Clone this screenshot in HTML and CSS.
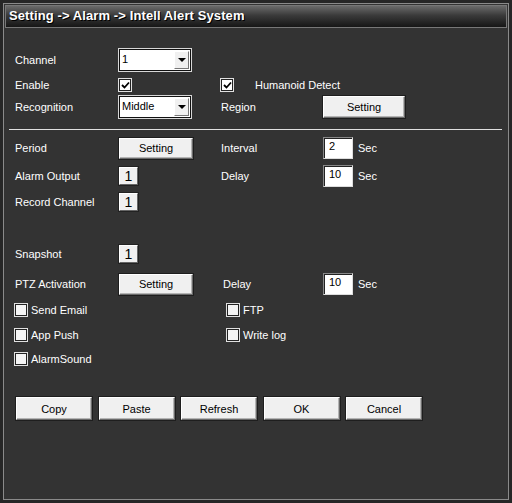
FILE: index.html
```html
<!DOCTYPE html>
<html lang="en">
<head>
    <meta charset="UTF-8">
    <title>Intell Alert System</title>
    <link rel="stylesheet" href="styles.css">
</head>
<body>
    <div class="window">
        <div class="inner">
            <div class="title-bar">Setting -&gt; Alarm -&gt; Intell Alert System</div>
            <div class="content">
                <div class="row row-channel">
                    <span class="label">Channel</span>
                    <span class="field">
                        <span class="select"><span class="select-text">1</span><span class="select-btn"><span class="arrow"></span></span></span>
                    </span>
                </div>
                <div class="row row-enable">
                    <span class="label">Enable</span>
                    <span class="field"><span class="check checked"><svg width="9" height="9" viewBox="0 0 9 9"><path d="M1 4 L3.5 6.5 L8 1.5" fill="none" stroke="#000" stroke-width="1.8"/></svg></span></span>
                    <span class="field-sm"><span class="check checked"><svg width="9" height="9" viewBox="0 0 9 9"><path d="M1 4 L3.5 6.5 L8 1.5" fill="none" stroke="#000" stroke-width="1.8"/></svg></span></span>
                    <span class="label-plain">Humanoid Detect</span>
                </div>
                <div class="row row-recog">
                    <span class="label">Recognition</span>
                    <span class="field">
                        <span class="select"><span class="select-text">Middle</span><span class="select-btn"><span class="arrow"></span></span></span>
                    </span>
                    <span class="label label2">Region</span>
                    <span class="btn btn-wide">Setting</span>
                </div>

                <div class="separator"></div>

                <div class="row row-period">
                    <span class="label">Period</span>
                    <span class="field"><span class="btn btn-set">Setting</span></span>
                    <span class="label label2">Interval</span>
                    <span class="num-input">2</span>
                    <span class="unit">Sec</span>
                </div>
                <div class="row row-output">
                    <span class="label">Alarm Output</span>
                    <span class="field"><span class="chan-box">1</span></span>
                    <span class="label label2">Delay</span>
                    <span class="num-input">10</span>
                    <span class="unit">Sec</span>
                </div>
                <div class="row row-record">
                    <span class="label">Record Channel</span>
                    <span class="field"><span class="chan-box">1</span></span>
                </div>
                <div class="row row-snap">
                    <span class="label">Snapshot</span>
                    <span class="field"><span class="chan-box">1</span></span>
                </div>
                <div class="row row-ptz">
                    <span class="label">PTZ Activation</span>
                    <span class="field"><span class="btn btn-set">Setting</span></span>
                    <span class="label label2 ptz-delay">Delay</span>
                    <span class="num-input">10</span>
                    <span class="unit">Sec</span>
                </div>
                <div class="row row-opt1">
                    <span class="opt"><span class="check"></span>Send Email</span>
                    <span class="opt"><span class="check"></span>FTP</span>
                </div>
                <div class="row row-opt">
                    <span class="opt"><span class="check"></span>App Push</span>
                    <span class="opt"><span class="check"></span>Write log</span>
                </div>
                <div class="row row-opt-last">
                    <span class="opt"><span class="check"></span>AlarmSound</span>
                </div>

                <div class="actions">
                    <span class="btn btn-action">Copy</span>
                    <span class="btn btn-action">Paste</span>
                    <span class="btn btn-action">Refresh</span>
                    <span class="btn btn-action">OK</span>
                    <span class="btn btn-action">Cancel</span>
                </div>
            </div>
        </div>
    </div>
</body>
</html>
```

FILE: styles.css
```css
/* Janela de configuracao */
body {
    margin: 0;
    padding: 0;
    background-color: #262626;
    font-family: "Liberation Sans", Arial, sans-serif;
    font-size: 11px;
    color: #fff;
}
.window {
    width: 512px;
    height: 503px;
    box-sizing: border-box;
    padding: 3px 3px 3px 3px;
    background-color: #262626;
}
.inner {
    height: 100%;
    box-sizing: border-box;
    border: 1px solid #8a8a8a;
    background-color: #333;
}
.title-bar {
    height: 21px;
    margin: 1px;
    padding-left: 3px;
    border: 1px solid #777;
    background: linear-gradient(#6a6a6a, #3a3a3a 45%, #161616);
    color: #fff;
    font-weight: bold;
    font-size: 13px;
    line-height: 20px;
    text-shadow: 1px 1px 0 #000;
    letter-spacing: 0.1px;
}
.content {
    padding: 20px 0 0 11px;
}
.row {
    display: flex;
    align-items: center;
    height: 22px;
}
.row-enable { margin-top: 3px; }
.row-recog { margin-top: 0; }
.row-period { margin-top: 7px; }
.row-output { margin-top: 6px; }
.row-record { margin-top: 4px; }
.row-snap { margin-top: 30px; }
.row-ptz { margin-top: 8px; }
.row-opt1 { margin-top: 4px; }
.row-opt { margin-top: 3px; }
.row-opt-last { margin-top: 2px; }
.label {
    width: 104px;
    flex-shrink: 0;
}
.label2 {
    width: 102px;
}
.ptz-delay {
    padding-left: 2px;
    width: 100px;
}
.field {
    width: 102px;
    flex-shrink: 0;
    display: flex;
    align-items: center;
}
.field-sm {
    width: 34px;
    display: flex;
    align-items: center;
}
.select {
    display: flex;
    width: 70px;
    height: 20px;
    background-color: #fff;
    border: 1px solid #111;
    box-shadow: 0 0 0 1px #d8d8d8;
    color: #000;
    font-size: 11px;
}
.select-text {
    flex: 1;
    padding-left: 2px;
    line-height: 18px;
}
.select-btn {
    width: 15px;
    margin: 1px;
    box-sizing: border-box;
    background-color: #f0f0f0;
    border: 1px solid;
    border-color: #fff #777 #777 #fff;
    display: flex;
    align-items: center;
    justify-content: center;
}
.arrow {
    width: 0;
    height: 0;
    border-left: 4px solid transparent;
    border-right: 4px solid transparent;
    border-top: 4px solid #000;
}
.check {
    display: inline-flex;
    align-items: center;
    justify-content: center;
    width: 10px;
    height: 10px;
    background-color: #fff;
    border: 1px solid #222;
    box-shadow: 0 0 0 1px #e0e0e0;
    margin-right: 4px;
}
.label-plain {
    padding-left: 0;
}
.btn {
    display: inline-flex;
    align-items: center;
    justify-content: center;
    box-sizing: border-box;
    background-color: #f0f0f0;
    color: #000;
    border: 1px solid;
    border-color: #fff #6a6a6a #6a6a6a #fff;
    box-shadow: 0 0 0 1px #1e1e1e, inset -1px -1px 0 #b4b4b4;
    font-size: 11px;
}
.btn-wide {
    width: 82px;
    height: 22px;
}
.btn-set {
    width: 74px;
    height: 21px;
}
.num-input {
    width: 30px;
    height: 22px;
    box-sizing: border-box;
    background-color: #fff;
    color: #000;
    border: 1px solid;
    border-color: #888 #ddd #ddd #888;
    box-shadow: inset 1px 1px 0 #222;
    padding: 3px 0 0 5px;
    font-size: 11px;
    line-height: 11px;
}
.unit {
    margin-left: 5px;
}
.chan-box {
    width: 19px;
    height: 18px;
    box-sizing: border-box;
    display: inline-flex;
    align-items: center;
    justify-content: center;
    background-color: #f0f0f0;
    color: #000;
    border: 1px solid;
    border-color: #fff #666 #666 #fff;
    box-shadow: 0 0 0 1px #222;
    font-size: 14px;
}
.opt {
    width: 212px;
    display: flex;
    align-items: center;
}
.opt .check {
    background-color: #f4f4f4;
}
.separator {
    margin: 11px 6px 0 -6px;
    border-top: 1px solid #e0e0e0;
}
.actions {
    display: flex;
    gap: 6.5px;
    margin-top: 27px;
    padding-left: 1px;
}
.btn-action {
    width: 76px;
    height: 23px;
}
```
